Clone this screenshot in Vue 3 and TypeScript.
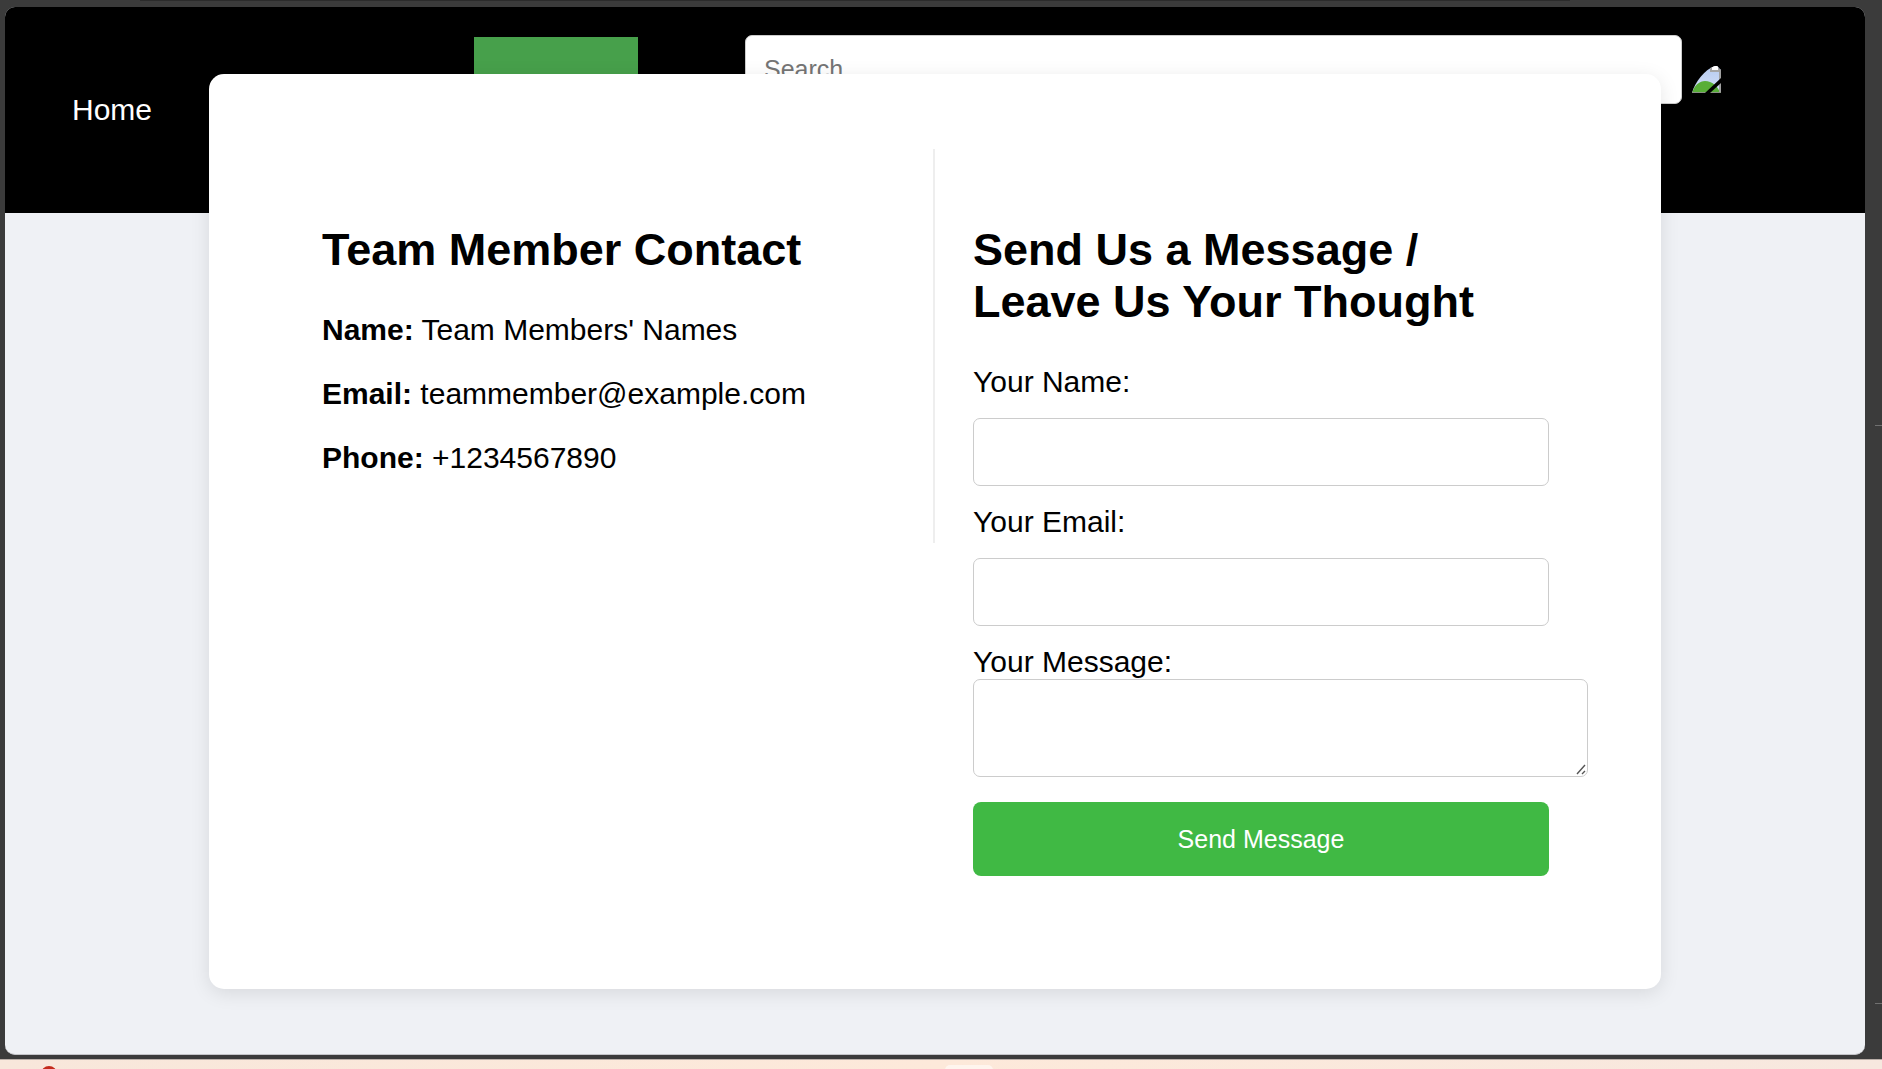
<script setup lang="ts">
import { reactive } from 'vue'

interface ContactLine {
  label: string
  value: string
}

const contactLines: ContactLine[] = [
  { label: 'Name:', value: "Team Members' Names" },
  { label: 'Email:', value: 'teammember@example.com' },
  { label: 'Phone:', value: '+1234567890' },
]

const form = reactive({ name: '', email: '', message: '', search: '' })
</script>

<template>
  <div class="desktop">
    <span class="tab-line"></span>
    <span class="tick tick-upper"></span>
    <span class="tick tick-lower"></span>

    <div class="pane">
      <header class="topbar">
        <a class="home" href="#">Home</a>
        <span class="active-block"></span>
        <div class="tools">
          <input v-model="form.search" class="search" type="text" placeholder="Search" aria-label="Search" />
          <svg class="avatar" width="29" height="47" viewBox="0 0 29 47" aria-hidden="true">
            <defs>
              <clipPath id="avatar-clip">
                <path d="M0 47C3 36 12 24 23 20H25L29 24V47Z" />
              </clipPath>
              <linearGradient id="avatar-sky" x1="0" y1="0" x2="0" y2="1">
                <stop offset="0" stop-color="#b7cbf0" />
                <stop offset="1" stop-color="#d3e0f8" />
              </linearGradient>
            </defs>
            <g clip-path="url(#avatar-clip)">
              <rect y="20" width="29" height="27" fill="url(#avatar-sky)" />
              <path d="M0 47C2 39 8 35 13 35C20 35 26 40 28 47Z" fill="#58ae38" />
              <path d="M18 20H27V26H18Z" fill="#a5a5a5" />
              <path d="M20 20H26V24H20Z" fill="#ffffff" />
              <path d="M27 23H29V47H27Z" fill="#a0a0a0" />
              <path d="M0 46H29V47H0Z" fill="#8b9484" />
              <path d="M13 47L29 32V37L18 47Z" fill="#000000" />
            </g>
          </svg>
        </div>
      </header>

      <main class="card">
        <section class="column details">
          <h2>Team Member Contact</h2>
          <p v-for="line in contactLines" :key="line.label">
            <strong>{{ line.label }}</strong> {{ line.value }}
          </p>
        </section>

        <section class="column">
          <h2>Send Us a Message / Leave Us Your Thought</h2>
          <form @submit.prevent>
            <label for="name">Your Name:</label>
            <input id="name" v-model="form.name" class="field" type="text" />
            <label for="email">Your Email:</label>
            <input id="email" v-model="form.email" class="field" type="email" />
            <label for="message">Your Message:</label>
            <textarea id="message" v-model="form.message"></textarea>
            <button type="submit">Send Message</button>
          </form>
        </section>
      </main>
    </div>

    <footer class="taskbar">
      <span class="badge"></span>
      <span class="chip"></span>
    </footer>
  </div>
</template>

<style>
body {
  margin: 0;
  background: #3b3b3b;
}
</style>

<style scoped>
* {
  box-sizing: border-box;
}

.desktop {
  position: relative;
  display: flex;
  flex-direction: column;
  min-height: 100vh;
  padding-top: 7px;
  overflow: hidden;
  background: #3b3b3b;
  color: #000;
  font-family: "Liberation Sans", Arial, sans-serif;
  font-size: 30px;
  line-height: 34px;
}

.tab-line {
  position: absolute;
  top: 0;
  left: 140px;
  right: 312px;
  height: 1px;
  background: #2b2b2b;
}

.tick {
  position: absolute;
  right: 0;
  width: 7px;
  height: 1px;
  background: #707070;
}

.tick-upper {
  top: 425px;
}

.tick-lower {
  top: 1003px;
}

.pane {
  flex: 1;
  margin: 0 17px 4px 5px;
  padding-bottom: 64px;
  overflow: hidden;
  border-bottom: 1px solid #c4c4c8;
  border-radius: 10px;
  background: #eff1f5;
}

.topbar {
  display: flex;
  align-items: center;
  height: 206px;
  padding: 0 144px 0 67px;
  background: #000;
}

.home {
  color: #fff;
  text-decoration: none;
}

.active-block {
  width: 164px;
  height: 146px;
  margin-left: 322px;
  background: #47a04b;
}

.tools {
  display: flex;
  flex: 1;
  align-items: center;
  align-self: flex-start;
  gap: 10px;
  margin: 28px 0 0 107px;
}

.search {
  flex: 1;
  min-width: 0;
  height: 69px;
  padding: 0 18px;
  border: 1px solid #ccc;
  border-radius: 7px;
  background: #fff;
  font: 25px "Liberation Sans", Arial, sans-serif;
}

.search::placeholder {
  color: #757575;
}

.avatar {
  flex: none;
}

.card {
  position: relative;
  display: flex;
  align-items: flex-start;
  margin: -139px 204px 0;
  padding: 75px;
  border-radius: 15px;
  background: #fff;
  box-shadow: 0 4px 19px rgba(0, 0, 0, 0.1);
}

.column {
  flex: none;
  width: 50%;
  padding: 37px 37px 38px 38px;
}

.details {
  border-right: 2px solid #eee;
}

h2 {
  margin: 38px 0 37px;
  font-size: 45px;
  line-height: 52px;
}

p {
  margin: 0 0 30px;
}

form {
  display: flex;
  flex-direction: column;
}

.field {
  height: 68px;
  margin: 19px 0;
  padding: 0 19px;
}

.field,
textarea {
  border: 1px solid #ccc;
  border-radius: 7px;
  background: #fff;
  font: 25px "Liberation Sans", Arial, sans-serif;
}

textarea {
  height: 98px;
  margin-right: -39px;
  padding: 19px;
}

textarea::-webkit-resizer {
  background: url("data:image/svg+xml,%3Csvg xmlns='http://www.w3.org/2000/svg' width='15' height='15'%3E%3Cpath d='M5 13L13 4M10 13L13 10' stroke='%23555' stroke-width='1.4' fill='none'/%3E%3C/svg%3E") no-repeat right bottom;
}

button {
  height: 74px;
  margin-top: 25px;
  border: 0;
  border-radius: 8px;
  background: #40b944;
  color: #fff;
  font: 25px "Liberation Sans", Arial, sans-serif;
}

.taskbar {
  position: relative;
  height: 10px;
  overflow: hidden;
  border-top: 1px solid #b9aea8;
  background: linear-gradient(90deg, #f8e7db, #fde9da 50%, #f7e8df);
}

.badge {
  position: absolute;
  top: 6px;
  left: 41px;
  width: 16px;
  height: 16px;
  border-radius: 50%;
  background: #c42b1c;
}

.chip {
  position: absolute;
  top: 5px;
  left: 50%;
  width: 48px;
  height: 40px;
  margin-left: 4px;
  border-radius: 5px;
  background: #fff5ee;
}
</style>
